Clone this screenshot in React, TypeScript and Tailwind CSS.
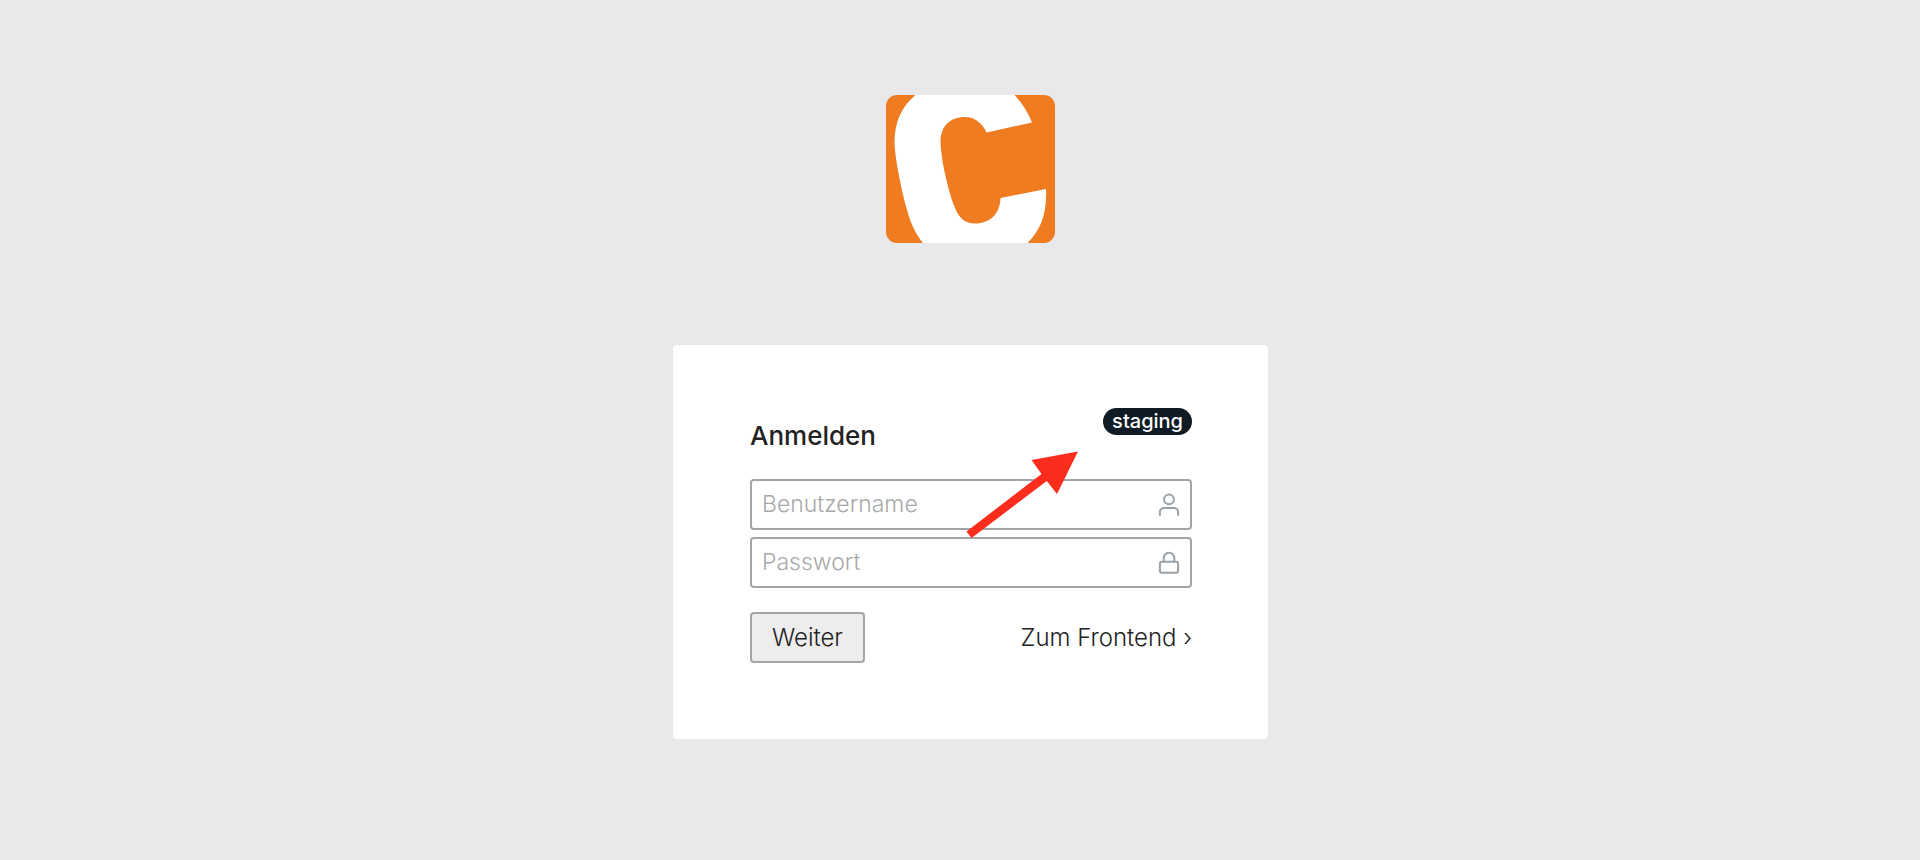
import type { ReactNode } from 'react'

function Logo() {
  return (
    <svg width="169" height="148" viewBox="0 0 169 148" role="img" aria-label="Contao">
      <rect width="169" height="148" rx="11" fill="#f07c22" />
      <path
        fill="#fff"
        d="M29.5 0C14 13 8.500 29 8.500 48C9 63 15 93 20.500 113C24 127 29 138 37 148H141.500C155 134 161 119 160 94L114.500 103C114 119 104 128.500 89 128.500C79 128.500 73 123 69 113C62 96 54.500 62 54.500 46C55 31 64 22 79 22C89 22 96 28 100.500 37.500L146 27.500C142 17 136 8 128.500 0Z"
      />
    </svg>
  )
}

function UserIcon() {
  return (
    <svg width="22" height="24" viewBox="0 0 22 24" fill="none" stroke="#9aa1a6" strokeWidth="2" strokeLinecap="round">
      <circle cx="11" cy="6.300" r="4.900" />
      <path d="M1.900 22V18.800A4 4 0 0 1 5.900 15H16.100A4 4 0 0 1 20.100 18.800V22" />
    </svg>
  )
}

function LockIcon() {
  return (
    <svg width="22" height="24" viewBox="0 0 22 24" fill="none" stroke="#9aa1a6" strokeWidth="2">
      <rect x="1.900" y="10.700" width="18.200" height="11" rx="2" />
      <path d="M5.700 10.700V7A5.300 5.300 0 0 1 16.300 7V10.700" />
    </svg>
  )
}

function Arrow() {
  return (
    <svg
      className="absolute left-[293px] top-[106px] pointer-events-none"
      width="112"
      height="88"
      viewBox="0 0 112 88"
      aria-hidden="true"
    >
      <path fill="#fc2d1d" d="M112 0.500L91 43L80.800 30L5.500 87L0.500 80.500L75.500 23L65.500 9Z" />
    </svg>
  )
}

interface FieldProps {
  id: string
  type: string
  label: string
  icon: ReactNode
}

function Field({ id, type, label, icon }: FieldProps) {
  return (
    <div className="flex h-[51px] items-center rounded border-2 border-[#a3a4a5] bg-white px-[10px]">
      <input
        id={id}
        type={type}
        aria-label={label}
        placeholder={label}
        className="min-w-0 flex-1 bg-transparent text-[23px] font-light outline-none placeholder:text-[#a9a9a9]"
      />
      <label htmlFor={id}>{icon}</label>
    </div>
  )
}

export default function App() {
  return (
    <div className="flex min-h-screen flex-col items-center bg-[#e9e9eb] pl-[21px] pt-[95px] pb-16 font-['Inter',sans-serif] text-[#222]">
      <Logo />

      <main className="relative mt-[102px] w-full max-w-[595px] rounded-[4px] bg-white pl-[77px] pr-[76px] pt-[63px] pb-[76px]">
        <div className="flex items-start justify-between">
          <h1 className="mt-3 text-[26px] leading-8 font-medium">Anmelden</h1>
          <span className="rounded-full bg-[#0f1c26] px-[9px] text-xl leading-[27px] font-medium text-white">
            staging
          </span>
        </div>

        <form className="mt-[27px]" onSubmit={(e) => e.preventDefault()}>
          <div className="flex flex-col gap-[7px]">
            <Field id="username" type="text" label="Benutzername" icon={<UserIcon />} />
            <Field id="password" type="password" label="Passwort" icon={<LockIcon />} />
          </div>

          <div className="mt-6 flex items-center justify-between">
            <button
              type="submit"
              className="h-[51px] rounded border-2 border-[#a3a4a5] bg-[#ededed] px-5 text-2xl font-light"
            >
              Weiter
            </button>
            <a href="#" className="text-2xl font-light">
              Zum Frontend ›
            </a>
          </div>
        </form>

        <Arrow />
      </main>
    </div>
  )
}
